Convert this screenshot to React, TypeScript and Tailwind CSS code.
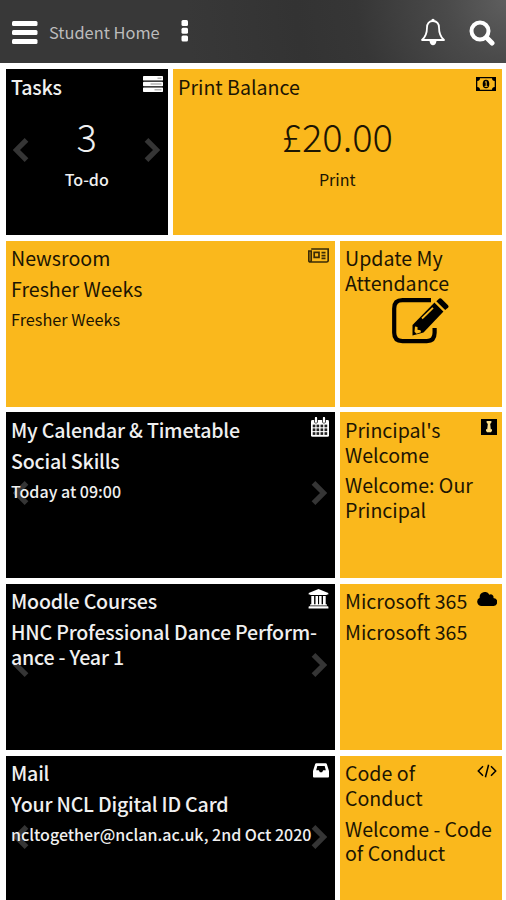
import type { ReactNode } from "react";

type Tone = "dark" | "amber";

interface TileProps {
  tone: Tone;
  title: ReactNode;
  icon?: ReactNode;
  wide?: boolean;
  arrows?: boolean;
  children?: ReactNode;
}

const Chevron = ({ className = "" }: { className?: string }) => (
  <svg width="16" height="26" viewBox="0 0 16 26" className={className}>
    <path d="M2.5 2.8 12.6 13 2.5 23.2" fill="none" stroke="#353535" strokeWidth="5.2" />
  </svg>
);

const TasksIcon = () => (
  <svg width="20" height="16" viewBox="0 0 20 16">
    <g fill="currentColor">
      <rect width="20" height="4.6" rx="0.7" />
      <rect y="5.7" width="20" height="4.6" rx="0.7" />
      <rect y="11.4" width="20" height="4.6" rx="0.7" />
    </g>
    <path d="M14.5 2.3h4M7.5 8h11M11.5 13.7h7" stroke="#b5b5b5" strokeWidth="1.4" />
  </svg>
);

const MoneyIcon = () => (
  <svg width="20" height="14" viewBox="0 0 20 14">
    <path
      fillRule="evenodd"
      fill="currentColor"
      d="M0 0h20v14H0zM4 1.3A2.8 2.8 0 0 1 1.3 4v6A2.8 2.8 0 0 1 4 12.7h12a2.8 2.8 0 0 1 2.7-2.7V4A2.8 2.8 0 0 1 16 1.3z"
    />
    <ellipse cx="10" cy="7" rx="3.3" ry="4.3" fill="currentColor" />
    <path d="M8.9 5.4 10.2 4.4v5M8.6 9.4h3" stroke="#fab81c" strokeWidth="1" fill="none" />
  </svg>
);

const NewsIcon = () => (
  <svg width="21" height="15" viewBox="0 0 21 15" fill="none" stroke="#3a2b06" strokeWidth="1.7">
    <path d="M3.2 1h17v11.4q0 1.6-1.6 1.6H2.4Q.8 14 .8 12.4V3h2.4v9.2q0 1.4-1 1.6" />
    <path d="M6.2 4.4h4.8v5H6.200zM13.500 4.600h4M13.500 7.600h4M13.500 10.400h4" />
  </svg>
);

const CalendarIcon = () => (
  <svg width="18" height="20" viewBox="0 0 18 20">
    <rect y="3" width="18" height="16.8" rx="1.4" fill="currentColor" />
    <path d="M5 .8v4M13 .8v4" stroke="#000" strokeWidth="3.6" strokeLinecap="round" />
    <path d="M5 1v3.8M13 1v3.8" stroke="currentColor" strokeWidth="2.2" strokeLinecap="round" />
    {[7.6, 11.4, 15.2].map((y) =>
      [1.7, 5.5, 9.5, 13.5].map((x) => (
        <rect key={`${x}-${y}`} x={x} y={y} width="2.7" height="2.7" fill="#222" />
      ))
    )}
  </svg>
);

const TieIcon = () => (
  <svg width="16" height="16" viewBox="0 0 16 16">
    <rect width="16" height="16" fill="currentColor" />
    <path d="M5.6 2h4.800v1.600L9.200 5l.6 5.200h1.200v1.600l-1 1.400H6l-1-1.400v-1.600h1.200L6.800 5 5.600 3.600z" fill="#fde08a" />
  </svg>
);

const BankIcon = () => (
  <svg width="21" height="20" viewBox="0 0 21 20" fill="currentColor">
    <path d="M10.500 0 20.300 4v1.500h-1.400q0 .6-.7.600H2.800q-.7 0-.7-.600H.7V4z" />
    <path d="M3.300 7h2.800v8.200h1.400V7h2.500v8.200h1.100V7h2.500v8.200h1.400V7h2.700v8.200h.6q.7 0 .7.600v.7H2v-.7q0-.6.7-.6h.6zM1.300 17.200h18.400q.7 0 .7.700V19.500H.6v-1.600q0-.7.700-.7z" />
  </svg>
);

const CloudIcon = () => (
  <svg width="20" height="14" viewBox="0 0 20 14" fill="currentColor">
    <path d="M4.500 14A4.300 4.300 0 0 1 2.700 5.800 5.200 5.200 0 0 1 12.400 2.700 2.800 2.800 0 0 1 16.400 6 4 4 0 0 1 16 14z" />
  </svg>
);

const InboxIcon = () => (
  <svg width="16" height="15" viewBox="0 0 16 15">
    <path
      fill="currentColor"
      fillRule="evenodd"
      d="M3.200.300h9.600q.7 0 1 .8L16 8v5.600q0 .9-.9.900H.9q-.9 0-.9-.9V8l2.200-6.900q.3-.8 1-.8zM4.300 3 3.200 7.200h2.600l1.100 2h2.200l1.100-2h2.600L11.700 3z"
    />
  </svg>
);

const CodeIcon = () => (
  <svg width="20" height="14" viewBox="0 0 20 14" fill="none" stroke="currentColor" strokeWidth="1.5">
    <path d="M6 2.300 1.300 7 6 11.700M14 2.300 18.700 7 14 11.700M11.600.800 8.400 13.200" />
  </svg>
);

const EditIcon = () => (
  <svg width="58" height="46" viewBox="0 0 58 46">
    <path
      d="M39 2.200H10.500Q2.200 2.200 2.200 10.500v24.300q0 8.300 8.300 8.300h24.300q7.800 0 7.800-8.300V30"
      fill="none"
      stroke="currentColor"
      strokeWidth="4.2"
    />
    <path d="M42.500 4.500 51.500 13.500 31.500 34.500 20.500 37.500V27z" fill="currentColor" />
    <path d="M43.500 4 52.500 13" stroke="#fab81c" strokeWidth="1.8" />
    <path d="M44.300 3.200 47.300.600q1.200-.8 2.200.2l6.500 6.500q1 1.200.2 2.200L53.200 12z" fill="currentColor" />
    <path d="M30 20.500 41 9.800" stroke="#fab81c" strokeWidth="1.8" />
    <path d="M23 28.500 25.500 29v2.700l3 .5.500 2-4.500 1.600-2-2z" fill="#fab81c" />
  </svg>
);

const Tile = ({ tone, title, icon, wide, arrows, children }: TileProps) => (
  <section
    className={`relative flex flex-col overflow-hidden px-[5px] pt-[5.5px] ${wide ? "col-span-2" : ""} ${
      tone === "dark" ? "bg-black text-[#f0f0f0] font-medium" : "bg-[#fab81c] text-[#1c1503]"
    }`}
  >
    {arrows && (
      <div className="absolute inset-x-[7px] top-[68px] flex justify-between pr-px">
        <Chevron className="rotate-180" />
        {/* stays above the text, unlike the left one */}
        <Chevron className="relative z-10" />
      </div>
    )}
    <header className="flex items-start justify-between">
      <h2 className={`whitespace-nowrap text-[19.6px] leading-[24.7px] ${tone === "dark" ? "tracking-[-0.2px]" : ""}`}>
        {title}
      </h2>
      <span className={`-mt-[0.5px] flex h-5 items-center ${wide ? "mr-px" : ""} ${tone === "dark" ? "text-white" : "text-black"}`}>
        {icon}
      </span>
    </header>
    {children}
  </section>
);

const Lead = ({ tone, children }: { tone: Tone; children: ReactNode }) => (
  <p
    className={`relative mt-[6px] self-start whitespace-nowrap text-[19.6px] leading-[24.5px] ${
      tone === "dark"
        ? "bg-[linear-gradient(#000,#000)] bg-[length:100%_calc(100%-4px)] bg-no-repeat tracking-[-0.2px]"
        : ""
    }`}
  >
    {children}
  </p>
);

const Note = ({ tone, children }: { tone: Tone; children: ReactNode }) => (
  <p className={`relative mt-2 whitespace-nowrap leading-5 ${tone === "dark" ? "text-[16px]" : "text-[16.3px]"}`}>
    {children}
  </p>
);

const Figure = ({ value, label }: { value: string; label: string }) => (
  <div className="flex flex-col items-center">
    <p className="mt-[11.5px] text-[38px] font-light leading-[50px]">{value}</p>
    <p className="mt-[8px] text-[16px] leading-5">{label}</p>
  </div>
);

export default function App() {
  return (
    <main className="h-[900px] w-[506px] overflow-hidden bg-white font-['Noto_Sans_CJK_SC','Noto_Sans',sans-serif]">
      {/* Top bar */}
      <nav className="flex h-[63px] items-center bg-[#383838] bg-[radial-gradient(circle_at_100%_0%,#5e5e5e_0px,#4a4a4a_60px,#363636_150px,#333333_210px,#383838_320px)] pl-3 pr-[11px] text-white">
        <svg width="26" height="26" viewBox="0 0 26 26" fill="currentColor" className="mt-0.5">
          <rect y="1" width="25.500" height="5" rx="1.500" />
          <rect y="10" width="25.500" height="5" rx="1.500" />
          <rect y="19" width="25.500" height="5" rx="1.500" />
        </svg>
        <h1 className="ml-[11px] mt-px w-[111px] whitespace-nowrap text-[16.4px] leading-6 text-[#bcbcbc]">Student Home</h1>
        <svg width="8" height="22" viewBox="0 0 8 22" fill="currentColor" className="-mt-0.5 ml-[21px]">
          <rect x=".5" width="6.500" height="6" rx="1.500" />
          <rect x=".5" y="7.800" width="6.500" height="6" rx="1.500" />
          <rect x=".5" y="15.600" width="6.500" height="6" rx="1.500" />
        </svg>
        <svg width="26" height="28" viewBox="0 0 26 28" className="ml-auto">
          <path
            d="M13 3c-4 0-6 3-6 6.500 0 6-1.500 9.500-5 12.500h22c-3.500-3-5-6.500-5-12.500 0-3.500-2-6.500-6-6.500z"
            fill="none"
            stroke="currentColor"
            strokeWidth="1.8"
            strokeLinejoin="round"
          />
          <path d="M11.500 3V1.500q1.500-1.700 3 0V3zM9.500 23h7q-.8 4.300-3.500 4.300T9.500 23z" fill="currentColor" />
        </svg>
        <svg width="26" height="26" viewBox="0 0 26 26" fill="none" stroke="currentColor" className="ml-[23px] mt-0.5">
          <circle cx="11" cy="11" r="8.500" strokeWidth="4" />
          <path d="m17.500 17.500 5.500 5.500" strokeWidth="5" strokeLinecap="round" />
        </svg>
      </nav>

      {/* Tiles */}
      <div className="grid grid-cols-[161.5px_161.5px_161.5px] grid-rows-[repeat(5,166px)] gap-x-[5.5px] gap-y-[5.67px] pl-[6px] pt-[6px]">
        <Tile tone="dark" title="Tasks" icon={<TasksIcon />} arrows>
          <Figure value="3" label="To-do" />
        </Tile>
        <Tile tone="amber" title="Print Balance" icon={<MoneyIcon />} wide>
          <Figure value="£20.00" label="Print" />
        </Tile>

        <Tile tone="amber" title="Newsroom" icon={<NewsIcon />} wide>
          <Lead tone="amber">Fresher Weeks</Lead>
          <Note tone="amber">Fresher Weeks</Note>
        </Tile>
        <Tile tone="amber" title={<>Update My<br />Attendance</>}>
          <div className="mt-[2.5px] self-center text-black">
            <EditIcon />
          </div>
        </Tile>

        <Tile tone="dark" title="My Calendar & Timetable" icon={<CalendarIcon />} wide arrows>
          <Lead tone="dark">Social Skills</Lead>
          <Note tone="dark">Today at 09:00</Note>
        </Tile>
        <Tile tone="amber" title={<>Principal's<br />Welcome</>} icon={<TieIcon />}>
          <Lead tone="amber">Welcome: Our<br />Principal</Lead>
        </Tile>

        <Tile tone="dark" title="Moodle Courses" icon={<BankIcon />} wide arrows>
          <Lead tone="dark">HNC Professional Dance Perform-<br />ance - Year 1</Lead>
        </Tile>
        <Tile tone="amber" title="Microsoft 365" icon={<CloudIcon />}>
          <Lead tone="amber">Microsoft 365</Lead>
        </Tile>

        <Tile tone="dark" title="Mail" icon={<InboxIcon />} wide arrows>
          <Lead tone="dark">Your NCL Digital ID Card</Lead>
          <Note tone="dark">ncltogether@nclan.ac.uk, 2nd Oct 2020</Note>
        </Tile>
        <Tile tone="amber" title={<>Code of<br />Conduct</>} icon={<CodeIcon />}>
          <Lead tone="amber">Welcome - Code<br />of Conduct</Lead>
        </Tile>
      </div>
    </main>
  );
}
